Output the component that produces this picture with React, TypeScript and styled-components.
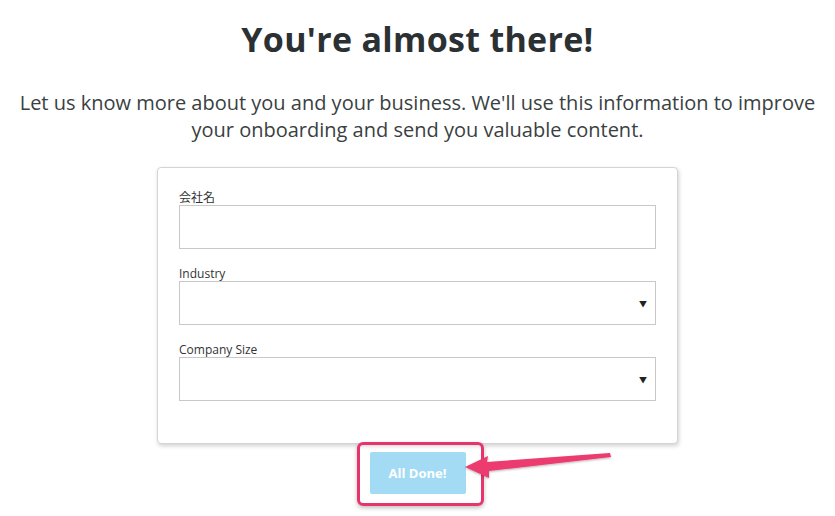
import styled, { createGlobalStyle } from "styled-components";

const GlobalStyle = createGlobalStyle`
  body {
    margin: 0;
    background: #ffffff;
    font-family: "Open Sans", "Noto Sans CJK JP", sans-serif;
  }
`;

const Page = styled.div`
  display: flex;
  flex-direction: column;
  align-items: center;
  padding-top: 16px;
  position: relative;
  height: 516px;
  box-sizing: border-box;
  overflow: hidden;
`;

const Title = styled.h1`
  margin: 0;
  font-size: 34px;
  line-height: 46px;
  font-weight: 700;
  color: #2b3033;
  letter-spacing: 0.3px;
`;

const Lead = styled.p`
  margin: 27px 0 0;
  width: 805px;
  text-align: center;
  font-size: 20px;
  line-height: 27px;
  color: #3a3f42;
`;

const Card = styled.div`
  margin-top: 24px;
  width: 521px;
  box-sizing: border-box;
  padding: 22px 21px 42px;
  border: 1px solid #d4d4d4;
  border-radius: 4px;
  background: #fff;
  box-shadow: 1px 2px 4px rgba(0, 0, 0, 0.18);
  display: flex;
  flex-direction: column;
  gap: 17px;
`;

const Field = styled.div`
  display: flex;
  flex-direction: column;
`;

const Label = styled.label`
  font-size: 12px;
  line-height: 15px;
  color: #333;
`;

const Box = styled.div<{ $select?: boolean }>`
  height: 44px;
  box-sizing: border-box;
  border: 1px solid #c8c8c8;
  background: #fff;
  display: flex;
  align-items: center;
  justify-content: flex-end;
  padding-right: 8px;
  font-size: 8px;
  color: #222;
`;

const Highlight = styled.div`
  margin-top: -2px;
  margin-left: 5px;
  padding: 7px 15px 9px 10px;
  border: 3px solid #e8336c;
  border-radius: 6px;
  box-shadow: 0 2px 4px rgba(0, 0, 0, 0.25);
`;

const DoneButton = styled.button`
  width: 96px;
  height: 42px;
  border: none;
  border-radius: 2px;
  background: #a2dbf3;
  color: #fff;
  font-family: "Open Sans", sans-serif;
  font-weight: 700;
  font-size: 13px;
  display: block;
`;

const Arrow = styled.svg`
  position: absolute;
  left: 0;
  top: 0;
  pointer-events: none;
`;

const fields = [
  { label: "会社名", select: false },
  { label: "Industry", select: true },
  { label: "Company Size", select: true },
];

export default function App() {
  return (
    <>
      <GlobalStyle />
      <Page>
        <Title>You're almost there!</Title>
        <Lead>
          Let us know more about you and your business. We'll use this information to improve
          your onboarding and send you valuable content.
        </Lead>
        <Card>
          {fields.map((f) => (
            <Field key={f.label}>
              <Label>{f.label}</Label>
              <Box $select={f.select}>{f.select ? "▼" : null}</Box>
            </Field>
          ))}
        </Card>
        <Highlight>
          <DoneButton>All Done!</DoneButton>
        </Highlight>
        <Arrow width="835" height="516" viewBox="0 0 835 516">
          <defs>
            <filter id="sh" x="-10%" y="-50%" width="120%" height="200%">
              <feDropShadow dx="0" dy="1" stdDeviation="1.2" floodOpacity="0.3" />
            </filter>
          </defs>
          <path
            d="M465 467 L488 456 L487 462 L610 453 L611 457 L489 471 L489 478 Z"
            fill="#ec3a6e"
            filter="url(#sh)"
          />
        </Arrow>
      </Page>
    </>
  );
}
